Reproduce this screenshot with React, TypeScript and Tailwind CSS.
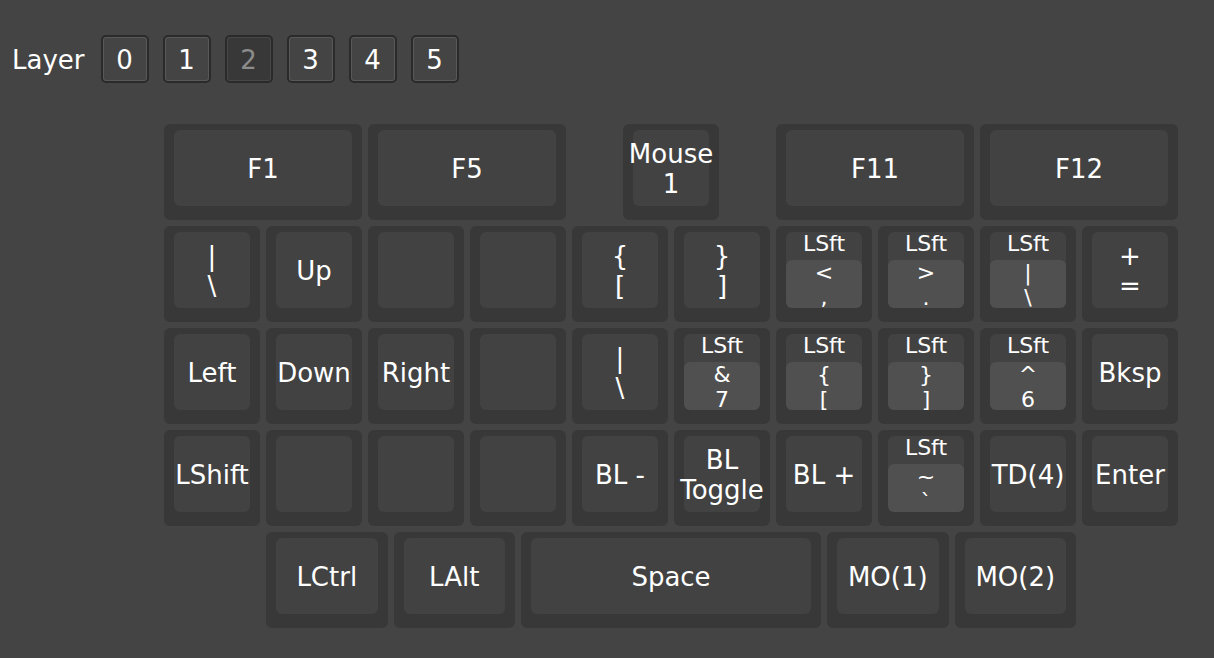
import React from "react";

type KeyDef = {
  w?: 1 | 1.25 | 2 | 3;
  ml?: "half" | "one";
  lines?: string[];
  mod?: { top: string; lines: string[] };
};

const widthClass: Record<string, string> = {
  "1": "w-[96px]",
  "1.25": "w-[121.5px]",
  "2": "w-[198px]",
  "3": "w-[300px]",
};

const rows: KeyDef[][] = [
  [
    { w: 2, lines: ["F1"] },
    { w: 2, lines: ["F5"] },
    { w: 1, ml: "half", lines: ["Mouse", "1"] },
    { w: 2, ml: "half", lines: ["F11"] },
    { w: 2, lines: ["F12"] },
  ],
  [
    { lines: ["|", "\\"] },
    { lines: ["Up"] },
    { lines: [] },
    { lines: [] },
    { lines: ["{", "["] },
    { lines: ["}", "]"] },
    { mod: { top: "LSft", lines: ["<", ","] } },
    { mod: { top: "LSft", lines: [">", "."] } },
    { mod: { top: "LSft", lines: ["|", "\\"] } },
    { lines: ["+", "="] },
  ],
  [
    { lines: ["Left"] },
    { lines: ["Down"] },
    { lines: ["Right"] },
    { lines: [] },
    { lines: ["|", "\\"] },
    { mod: { top: "LSft", lines: ["&", "7"] } },
    { mod: { top: "LSft", lines: ["{", "["] } },
    { mod: { top: "LSft", lines: ["}", "]"] } },
    { mod: { top: "LSft", lines: ["^", "6"] } },
    { lines: ["Bksp"] },
  ],
  [
    { lines: ["LShift"] },
    { lines: [] },
    { lines: [] },
    { lines: [] },
    { lines: ["BL -"] },
    { lines: ["BL", "Toggle"] },
    { lines: ["BL +"] },
    { mod: { top: "LSft", lines: ["~", "`"] } },
    { lines: ["TD(4)"] },
    { lines: ["Enter"] },
  ],
  [
    { w: 1.25, ml: "one", lines: ["LCtrl"] },
    { w: 1.25, lines: ["LAlt"] },
    { w: 3, lines: ["Space"] },
    { w: 1.25, lines: ["MO(1)"] },
    { w: 1.25, lines: ["MO(2)"] },
  ],
];

function Key({ k }: { k: KeyDef }) {
  const w = widthClass[String(k.w ?? 1)];
  const ml = k.ml === "half" ? "ml-[51px]" : k.ml === "one" ? "ml-[102px]" : "";
  return (
    <div
      className={`${w} ${ml} h-[96px] shrink-0 rounded-[6px] bg-[#383838] pt-[6px] px-[10px] pb-[14px]`}
    >
      <div className="h-[76px] w-full rounded-[6px] bg-[#424242] text-white">
        {k.mod ? (
          <div className="flex h-full flex-col">
            <div className="flex h-[28px] items-start justify-center whitespace-nowrap text-[22px] leading-[24px]">
              {k.mod.top}
            </div>
            <div className="flex h-[48px] flex-col items-center rounded-[6px] bg-[#505050] text-[22px] leading-[25px]">
              {k.mod.lines.map((l, i) => (
                <div key={i} className="whitespace-nowrap">
                  {l}
                </div>
              ))}
            </div>
          </div>
        ) : (
          <div className="flex h-full flex-col items-center justify-center pt-[1px] text-[26px] leading-[30px]">
            {k.lines!.map((l, i) => (
              <div key={i} className="whitespace-nowrap">
                {l}
              </div>
            ))}
          </div>
        )}
      </div>
    </div>
  );
}

function LayerButton({ label, active }: { label: string; active?: boolean }) {
  return (
    <div className="h-[48px] w-[48px] rounded-[5px] border-2 border-[#2a2a2a]">
      <div
        className={`flex h-full w-full items-center justify-center rounded-[3px] border pt-[1px] text-[26px] leading-[30px] ${
          active
            ? "border-[#474747] bg-[#383838] text-[#8c8c8c]"
            : "border-[#585858] bg-[#444444] text-white"
        }`}
      >
        {label}
      </div>
    </div>
  );
}

export default function App() {
  return (
    <div
      className="h-[658px] w-full overflow-hidden bg-[#444444] text-white"
      style={{ fontFamily: '"DejaVu Sans", Verdana, sans-serif' }}
    >
      <div className="flex items-center pl-[12px] pt-[35px]">
        <div className="mr-[16px] pt-[2px] text-[26px] leading-[30px] text-white">Layer</div>
        <div className="flex gap-[14px]">
          {["0", "1", "2", "3", "4", "5"].map((l) => (
            <LayerButton key={l} label={l} active={l === "2"} />
          ))}
        </div>
      </div>
      <div className="ml-[164px] mt-[41px] flex flex-col gap-[6px]">
        {rows.map((row, ri) => (
          <div key={ri} className="flex gap-[6px]">
            {row.map((k, ki) => (
              <Key key={ki} k={k} />
            ))}
          </div>
        ))}
      </div>
    </div>
  );
}
